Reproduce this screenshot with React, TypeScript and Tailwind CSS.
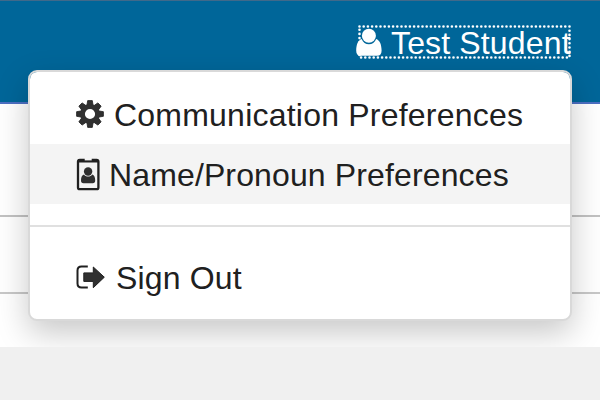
import type { ReactNode } from 'react';

function UserIcon() {
  return (
    <svg width="26" height="28" viewBox="0 0 26 28" fill="currentColor">
      <path d="M5.600 11C2.200 12.200 .3 16 .2 22.500C.1 26 1.800 27.700 4.500 27.700H21.200C24 27.700 25.700 26 25.600 22.500C25.500 16 23.600 12.200 20.200 11C18.700 14.600 16.300 16.200 12.900 16.200C9.500 16.200 7.100 14.600 5.600 11Z" />
      <circle cx="12.900" cy="7.700" r="7" />
    </svg>
  );
}

function FocusRing() {
  return (
    <svg className="absolute inset-0" width="213" height="34" viewBox="0 0 213 34" fill="none">
      <path d="M1.500 1.500H211.500V32.500H1.500Z" stroke="currentColor" strokeWidth="2.600" strokeLinecap="round" strokeDasharray="0 4.200" />
    </svg>
  );
}

function GearIcon() {
  const teeth = [0, 45, 90, 135, 180, 225, 270, 315];
  return (
    <svg width="28" height="28" viewBox="-14 -14 28 28" fill="#303030" stroke="#202020" strokeWidth=".8" strokeLinejoin="round">
      {teeth.map((angle) => (
        <path key={angle} d="M-3.200 -8L-2.300 -13.400H2.300L3.200 -8Z" transform={`rotate(${angle})`} />
      ))}
      <circle r="7.500" fill="none" stroke="#303030" strokeWidth="4.800" />
    </svg>
  );
}

function BadgeIcon() {
  return (
    <svg width="24" height="33" viewBox="0 0 24 33" fill="none">
      <rect x="2" y="1.800" width="20.400" height="29.400" rx="1.800" stroke="#202020" strokeWidth="2.300" />
      <path d="M2 1H22V4.500H2Z" fill="#202020" />
      <path d="M8.700 0H15.700V2.400H8.700Z" fill="#f4f4f4" />
      <path d="M8 16.400C5.900 17.100 5 19 5 22.300C5 24.500 5.800 25.300 7.500 25.300H16.700C18.400 25.300 19.200 24.500 19.200 22.300C19.200 19 18.300 17.100 16.200 16.400C15.200 17.900 13.900 18.500 12.100 18.500C10.300 18.500 9 17.900 8 16.400Z" fill="#303030" />
      <circle cx="12.100" cy="13.500" r="4.200" fill="#303030" />
    </svg>
  );
}

function SignOutIcon() {
  return (
    <svg width="30" height="24" viewBox="0 0 30 24" fill="none">
      <path d="M11.800 1.500H5.500C2.800 1.500 1.500 2.900 1.500 5.500V18.500C1.500 21.100 2.800 22.500 5.500 22.500H11.800" stroke="#202020" strokeWidth="2" />
      <path d="M7.800 7.900H17.300V2L28.300 12.200L17.300 22.700V16.400H7.800Z" fill="#303030" stroke="#202020" strokeWidth="1" strokeLinejoin="round" />
    </svg>
  );
}

interface MenuItemProps {
  icon: ReactNode;
  label: string;
  className: string;
}

function MenuItem({ icon, label, className }: MenuItemProps) {
  return (
    <li className={`flex h-[60px] items-center pl-[46px] ${className}`}>
      {icon}
      <span className="pt-0.5 whitespace-nowrap">{label}</span>
    </li>
  );
}

export default function App() {
  return (
    <div className="relative flex h-[400px] w-[600px] flex-col overflow-hidden bg-white font-['Liberation_Sans',sans-serif] text-[32px] leading-[36px] text-[#202020]">
      <header className="flex h-[104px] items-start justify-end border-t border-b-2 border-t-[#40698a] border-b-[#4c6fc2] bg-[#006699] pt-6 pr-[29px]">
        {/* Focused account link */}
        <a className="relative flex h-[34px] w-[213px] items-center text-white">
          <span className="-ml-0.5 mr-[9px] shrink-0">
            <UserIcon />
          </span>
          <span className="pt-px tracking-[0.15px] whitespace-nowrap">Test Student</span>
          <FocusRing />
        </a>
      </header>

      <main className="flex-1">
        <div className="h-[113px] border-b-2 border-[#c2c2c2]" />
        <div className="h-[77px] border-b-2 border-[#c8c8c8]" />
      </main>

      <footer className="relative z-20 h-[53px] bg-[#f0f0f0]" />

      {/* Account menu */}
      <ul className="absolute top-[70px] left-[28px] z-10 w-[544px] rounded-[9px] border-2 border-[#d9d9d9] bg-white bg-clip-padding py-3 shadow-[0_12px_32px_rgba(0,0,0,0.22)]">
        <MenuItem icon={<GearIcon />} label="Communication Preferences" className="gap-[10px] tracking-[0.22px]" />
        <MenuItem icon={<BadgeIcon />} label="Name/Pronoun Preferences" className="gap-[9px] bg-[#f4f4f4] tracking-[0.13px]" />
        <li className="mt-[21px] mb-5 h-0.5 bg-[#e0e0e0]" />
        <MenuItem icon={<SignOutIcon />} label="Sign Out" className="gap-[10px] tracking-[0.15px]" />
      </ul>
    </div>
  );
}
